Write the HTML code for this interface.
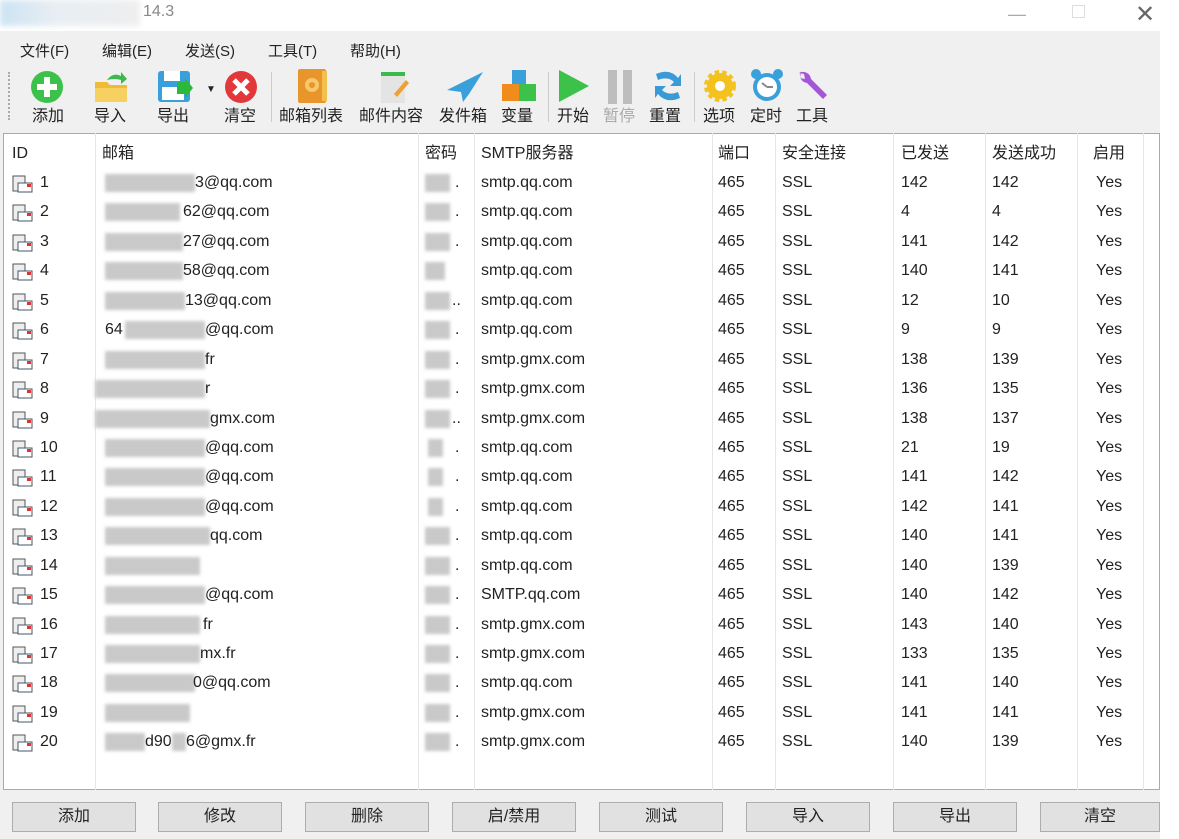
<!DOCTYPE html>
<html><head><meta charset="utf-8"><style>
*{margin:0;padding:0;box-sizing:border-box}
body{width:1179px;height:839px;background:#fff;position:relative;overflow:hidden;font-family:"Liberation Sans","Noto Sans CJK SC",sans-serif;color:#222;font-size:16px}
.a{position:absolute;white-space:nowrap}
.app{position:absolute;left:0;top:31px;width:1160px;height:808px;background:#f0f0f0}
.tbl{position:absolute;left:3px;top:133px;width:1157px;height:657px;background:#fff;border:1px solid #aaa}
.vl{position:absolute;top:133px;height:657px;width:1px;background:#e6e6e6}
.r{position:absolute;left:0;width:1160px;height:29px;line-height:29px}
.r span{position:absolute}
.bl{position:absolute;background:#c9c9c9;height:18px;top:6px;filter:blur(1.5px)}
.ic{position:absolute;left:12px;top:6px;width:22px;height:18px}
.btn{position:absolute;top:802px;height:30px;width:124px;background:#e1e1e1;border:1px solid #adadad;text-align:center;line-height:28px;font-size:16px}
.tb{position:absolute;top:102px;font-size:16px}
</style></head><body>
<div class="a" style="left:0;top:0;width:140px;height:26px;background:linear-gradient(90deg,#cde3f3,#e8eef3 40%,#eee);filter:blur(3px)"></div>
<div class="a" style="left:143px;top:3px;font-size:16px;color:#888">14.3</div>
<div class="a" style="left:1008px;top:4px;color:#aaa;font-size:18px">—</div>
<div class="a" style="left:1072px;top:5px;width:13px;height:13px;border:1px solid #ddd"></div>
<div class="a" style="left:1135px;top:0px;color:#666;font-size:24px">✕</div>
<div class="app"></div>
<div class="a" style="left:20px;top:40px;font-size:15px">文件(F)</div>
<div class="a" style="left:102px;top:40px;font-size:15px">编辑(E)</div>
<div class="a" style="left:185px;top:40px;font-size:15px">发送(S)</div>
<div class="a" style="left:268px;top:40px;font-size:15px">工具(T)</div>
<div class="a" style="left:350px;top:40px;font-size:15px">帮助(H)</div>
<div class="a" style="left:8px;top:72px;height:48px;border-left:2px dotted #aaa"></div>
<!-- icons -->
<svg class="a" style="left:30px;top:70px" width="36" height="34"><circle cx="17" cy="17" r="16" fill="#3cc24a"/><rect x="7" y="14" width="20" height="6" fill="#fff"/><rect x="14" y="7" width="6" height="20" fill="#fff"/></svg>
<svg class="a" style="left:93px;top:70px" width="36" height="34"><path d="M2 12h12l3 3h17v17H2z" fill="#f0b936"/><path d="M2 18h32v14H2z" fill="#f6d061"/><path d="M14 10q6-8 14-4l0-4 6 7-6 5v-4q-6-2-14 0z" fill="#3cb94a"/></svg>
<svg class="a" style="left:157px;top:70px" width="36" height="34"><rect x="1" y="1" width="32" height="31" rx="3" fill="#3aa0dc"/><rect x="7" y="1" width="16" height="10" fill="#fff"/><rect x="5" y="17" width="22" height="13" fill="#fff"/><path d="M20 12h8v-4l8 10-8 10v-4h-8z" fill="#2cb83c"/></svg>
<div class="a" style="left:206px;top:84px;font-size:10px">▼</div>
<svg class="a" style="left:224px;top:70px" width="36" height="34"><circle cx="17" cy="17" r="16" fill="#e3383b"/><path d="M10 10l14 14M24 10L10 24" stroke="#fff" stroke-width="5"/></svg>
<div class="a" style="left:271px;top:72px;height:50px;width:1px;background:#ccc"></div>
<svg class="a" style="left:296px;top:68px" width="36" height="36"><rect x="2" y="1" width="28" height="34" rx="2" fill="#e8952c"/><rect x="26" y="3" width="5" height="30" fill="#f4c04d"/><circle cx="16" cy="17" r="7" fill="#f7c76c"/><circle cx="16" cy="17" r="3" fill="#e8952c"/></svg>
<svg class="a" style="left:376px;top:70px" width="36" height="34"><rect x="5" y="5" width="24" height="28" fill="#e4e4e4"/><rect x="5" y="2" width="24" height="4" fill="#3cb94a"/><path d="M18 24l12-14 3 3-12 14z" fill="#f0a030"/></svg>
<svg class="a" style="left:445px;top:70px" width="40" height="34"><path d="M38 2L2 20l14 2 2 10 6-8z" fill="#3aa0dc"/></svg>
<svg class="a" style="left:500px;top:68px" width="38" height="36"><rect x="12" y="2" width="14" height="14" fill="#3aa0dc"/><rect x="2" y="16" width="17" height="17" fill="#f08c1c"/><rect x="19" y="16" width="17" height="17" fill="#3cc24a"/></svg>
<div class="a" style="left:548px;top:72px;height:50px;width:1px;background:#ccc"></div>
<svg class="a" style="left:556px;top:68px" width="36" height="36"><path d="M3 2l30 16-30 16z" fill="#3cc24a"/></svg>
<svg class="a" style="left:606px;top:70px" width="30" height="34"><rect x="2" y="0" width="9" height="34" fill="#bdbdbd"/><rect x="17" y="0" width="9" height="34" fill="#bdbdbd"/></svg>
<svg class="a" style="left:652px;top:68px" width="32" height="36"><path d="M4 6q14-6 22 4l3-4v12h-11l4-4q-6-6-16-2z" fill="#3a9ad8"/><path d="M28 30q-14 6-22-4l-3 4V18h11l-4 4q6 6 16 2z" fill="#3a9ad8"/></svg>
<div class="a" style="left:694px;top:72px;height:50px;width:1px;background:#ccc"></div>
<svg class="a" style="left:703px;top:69px" width="34" height="34"><circle cx="17" cy="17" r="13" fill="#f4c21c" stroke="#f4c21c" stroke-width="6" stroke-dasharray="4 3"/><circle cx="17" cy="17" r="5" fill="#fff"/></svg>
<svg class="a" style="left:749px;top:69px" width="36" height="34"><circle cx="18" cy="18" r="14" fill="#3aa0dc"/><circle cx="18" cy="18" r="10" fill="#fff"/><circle cx="7" cy="5" r="5" fill="#3aa0dc"/><circle cx="29" cy="5" r="5" fill="#3aa0dc"/><path d="M18 18l-5-4M18 18h6" stroke="#888" stroke-width="2"/></svg>
<svg class="a" style="left:795px;top:69px" width="36" height="34"><path d="M6 2a8 8 0 0 0 6 12l16 16 4-4-16-16A8 8 0 0 0 4 4l5 1 1 5-5-1z" fill="#a455d8"/></svg>
<div class="tb" style="left:32px">添加</div>
<div class="tb" style="left:94px">导入</div>
<div class="tb" style="left:157px">导出</div>
<div class="tb" style="left:224px">清空</div>
<div class="tb" style="left:279px">邮箱列表</div>
<div class="tb" style="left:359px">邮件内容</div>
<div class="tb" style="left:439px">发件箱</div>
<div class="tb" style="left:501px">变量</div>
<div class="tb" style="left:557px">开始</div>
<div class="tb" style="left:603px;color:#aaa">暂停</div>
<div class="tb" style="left:649px">重置</div>
<div class="tb" style="left:703px">选项</div>
<div class="tb" style="left:750px">定时</div>
<div class="tb" style="left:796px">工具</div>
<div class="tbl"></div>
<div class="vl" style="left:95px"></div><div class="vl" style="left:418px"></div><div class="vl" style="left:474px"></div><div class="vl" style="left:712px"></div><div class="vl" style="left:775px"></div><div class="vl" style="left:893px"></div><div class="vl" style="left:985px"></div><div class="vl" style="left:1077px"></div><div class="vl" style="left:1143px"></div>
<div class="r" style="top:139px"><span style="left:12px">ID</span><span style="left:102px">邮箱</span><span style="left:425px">密码</span><span style="left:481px">SMTP服务器</span><span style="left:718px">端口</span><span style="left:782px">安全连接</span><span style="left:901px">已发送</span><span style="left:992px">发送成功</span><span style="left:1093px">启用</span></div>
<div class="r" style="top:168px"><div class="ic"><svg width="22" height="18"><rect x="1" y="1" width="12" height="15" fill="#eee" stroke="#555"/><rect x="6" y="8" width="14" height="9" fill="#fff" stroke="#456"/><rect x="15" y="9" width="4" height="3" fill="#d33"/></svg></div><span style="left:40px">1</span><div class="bl" style="left:105px;width:90px"></div><span style="left:195px">3@qq.com</span><div class="bl" style="left:425px;width:25px"></div><span style="left:455px">.</span><span style="left:481px">smtp.qq.com</span><span style="left:718px">465</span><span style="left:782px">SSL</span><span style="left:901px">142</span><span style="left:992px">142</span><span style="left:1096px">Yes</span></div>
<div class="r" style="top:197px"><div class="ic"><svg width="22" height="18"><rect x="1" y="1" width="12" height="15" fill="#eee" stroke="#555"/><rect x="6" y="8" width="14" height="9" fill="#fff" stroke="#456"/><rect x="15" y="9" width="4" height="3" fill="#d33"/></svg></div><span style="left:40px">2</span><div class="bl" style="left:105px;width:75px"></div><span style="left:183px">62@qq.com</span><div class="bl" style="left:425px;width:25px"></div><span style="left:455px">.</span><span style="left:481px">smtp.qq.com</span><span style="left:718px">465</span><span style="left:782px">SSL</span><span style="left:901px">4</span><span style="left:992px">4</span><span style="left:1096px">Yes</span></div>
<div class="r" style="top:227px"><div class="ic"><svg width="22" height="18"><rect x="1" y="1" width="12" height="15" fill="#eee" stroke="#555"/><rect x="6" y="8" width="14" height="9" fill="#fff" stroke="#456"/><rect x="15" y="9" width="4" height="3" fill="#d33"/></svg></div><span style="left:40px">3</span><div class="bl" style="left:105px;width:78px"></div><span style="left:183px">27@qq.com</span><div class="bl" style="left:425px;width:25px"></div><span style="left:455px">.</span><span style="left:481px">smtp.qq.com</span><span style="left:718px">465</span><span style="left:782px">SSL</span><span style="left:901px">141</span><span style="left:992px">142</span><span style="left:1096px">Yes</span></div>
<div class="r" style="top:256px"><div class="ic"><svg width="22" height="18"><rect x="1" y="1" width="12" height="15" fill="#eee" stroke="#555"/><rect x="6" y="8" width="14" height="9" fill="#fff" stroke="#456"/><rect x="15" y="9" width="4" height="3" fill="#d33"/></svg></div><span style="left:40px">4</span><div class="bl" style="left:105px;width:78px"></div><span style="left:183px">58@qq.com</span><div class="bl" style="left:425px;width:20px"></div><span style="left:481px">smtp.qq.com</span><span style="left:718px">465</span><span style="left:782px">SSL</span><span style="left:901px">140</span><span style="left:992px">141</span><span style="left:1096px">Yes</span></div>
<div class="r" style="top:286px"><div class="ic"><svg width="22" height="18"><rect x="1" y="1" width="12" height="15" fill="#eee" stroke="#555"/><rect x="6" y="8" width="14" height="9" fill="#fff" stroke="#456"/><rect x="15" y="9" width="4" height="3" fill="#d33"/></svg></div><span style="left:40px">5</span><div class="bl" style="left:105px;width:80px"></div><span style="left:185px">13@qq.com</span><div class="bl" style="left:425px;width:25px"></div><span style="left:452px">..</span><span style="left:481px">smtp.qq.com</span><span style="left:718px">465</span><span style="left:782px">SSL</span><span style="left:901px">12</span><span style="left:992px">10</span><span style="left:1096px">Yes</span></div>
<div class="r" style="top:315px"><div class="ic"><svg width="22" height="18"><rect x="1" y="1" width="12" height="15" fill="#eee" stroke="#555"/><rect x="6" y="8" width="14" height="9" fill="#fff" stroke="#456"/><rect x="15" y="9" width="4" height="3" fill="#d33"/></svg></div><span style="left:40px">6</span><span style="left:105px">64</span><div class="bl" style="left:125px;width:80px"></div><span style="left:205px">@qq.com</span><div class="bl" style="left:425px;width:25px"></div><span style="left:455px">.</span><span style="left:481px">smtp.qq.com</span><span style="left:718px">465</span><span style="left:782px">SSL</span><span style="left:901px">9</span><span style="left:992px">9</span><span style="left:1096px">Yes</span></div>
<div class="r" style="top:345px"><div class="ic"><svg width="22" height="18"><rect x="1" y="1" width="12" height="15" fill="#eee" stroke="#555"/><rect x="6" y="8" width="14" height="9" fill="#fff" stroke="#456"/><rect x="15" y="9" width="4" height="3" fill="#d33"/></svg></div><span style="left:40px">7</span><div class="bl" style="left:105px;width:100px"></div><span style="left:205px">fr</span><div class="bl" style="left:425px;width:25px"></div><span style="left:455px">.</span><span style="left:481px">smtp.gmx.com</span><span style="left:718px">465</span><span style="left:782px">SSL</span><span style="left:901px">138</span><span style="left:992px">139</span><span style="left:1096px">Yes</span></div>
<div class="r" style="top:374px"><div class="ic"><svg width="22" height="18"><rect x="1" y="1" width="12" height="15" fill="#eee" stroke="#555"/><rect x="6" y="8" width="14" height="9" fill="#fff" stroke="#456"/><rect x="15" y="9" width="4" height="3" fill="#d33"/></svg></div><span style="left:40px">8</span><div class="bl" style="left:95px;width:110px"></div><span style="left:205px">r</span><div class="bl" style="left:425px;width:25px"></div><span style="left:455px">.</span><span style="left:481px">smtp.gmx.com</span><span style="left:718px">465</span><span style="left:782px">SSL</span><span style="left:901px">136</span><span style="left:992px">135</span><span style="left:1096px">Yes</span></div>
<div class="r" style="top:404px"><div class="ic"><svg width="22" height="18"><rect x="1" y="1" width="12" height="15" fill="#eee" stroke="#555"/><rect x="6" y="8" width="14" height="9" fill="#fff" stroke="#456"/><rect x="15" y="9" width="4" height="3" fill="#d33"/></svg></div><span style="left:40px">9</span><div class="bl" style="left:95px;width:115px"></div><span style="left:210px">gmx.com</span><div class="bl" style="left:425px;width:25px"></div><span style="left:452px">..</span><span style="left:481px">smtp.gmx.com</span><span style="left:718px">465</span><span style="left:782px">SSL</span><span style="left:901px">138</span><span style="left:992px">137</span><span style="left:1096px">Yes</span></div>
<div class="r" style="top:433px"><div class="ic"><svg width="22" height="18"><rect x="1" y="1" width="12" height="15" fill="#eee" stroke="#555"/><rect x="6" y="8" width="14" height="9" fill="#fff" stroke="#456"/><rect x="15" y="9" width="4" height="3" fill="#d33"/></svg></div><span style="left:40px">10</span><div class="bl" style="left:105px;width:100px"></div><span style="left:205px">@qq.com</span><div class="bl" style="left:428px;width:15px"></div><span style="left:455px">.</span><span style="left:481px">smtp.qq.com</span><span style="left:718px">465</span><span style="left:782px">SSL</span><span style="left:901px">21</span><span style="left:992px">19</span><span style="left:1096px">Yes</span></div>
<div class="r" style="top:462px"><div class="ic"><svg width="22" height="18"><rect x="1" y="1" width="12" height="15" fill="#eee" stroke="#555"/><rect x="6" y="8" width="14" height="9" fill="#fff" stroke="#456"/><rect x="15" y="9" width="4" height="3" fill="#d33"/></svg></div><span style="left:40px">11</span><div class="bl" style="left:105px;width:100px"></div><span style="left:205px">@qq.com</span><div class="bl" style="left:428px;width:15px"></div><span style="left:455px">.</span><span style="left:481px">smtp.qq.com</span><span style="left:718px">465</span><span style="left:782px">SSL</span><span style="left:901px">141</span><span style="left:992px">142</span><span style="left:1096px">Yes</span></div>
<div class="r" style="top:492px"><div class="ic"><svg width="22" height="18"><rect x="1" y="1" width="12" height="15" fill="#eee" stroke="#555"/><rect x="6" y="8" width="14" height="9" fill="#fff" stroke="#456"/><rect x="15" y="9" width="4" height="3" fill="#d33"/></svg></div><span style="left:40px">12</span><div class="bl" style="left:105px;width:100px"></div><span style="left:205px">@qq.com</span><div class="bl" style="left:428px;width:15px"></div><span style="left:455px">.</span><span style="left:481px">smtp.qq.com</span><span style="left:718px">465</span><span style="left:782px">SSL</span><span style="left:901px">142</span><span style="left:992px">141</span><span style="left:1096px">Yes</span></div>
<div class="r" style="top:521px"><div class="ic"><svg width="22" height="18"><rect x="1" y="1" width="12" height="15" fill="#eee" stroke="#555"/><rect x="6" y="8" width="14" height="9" fill="#fff" stroke="#456"/><rect x="15" y="9" width="4" height="3" fill="#d33"/></svg></div><span style="left:40px">13</span><div class="bl" style="left:105px;width:105px"></div><span style="left:210px">qq.com</span><div class="bl" style="left:425px;width:25px"></div><span style="left:455px">.</span><span style="left:481px">smtp.qq.com</span><span style="left:718px">465</span><span style="left:782px">SSL</span><span style="left:901px">140</span><span style="left:992px">141</span><span style="left:1096px">Yes</span></div>
<div class="r" style="top:551px"><div class="ic"><svg width="22" height="18"><rect x="1" y="1" width="12" height="15" fill="#eee" stroke="#555"/><rect x="6" y="8" width="14" height="9" fill="#fff" stroke="#456"/><rect x="15" y="9" width="4" height="3" fill="#d33"/></svg></div><span style="left:40px">14</span><div class="bl" style="left:105px;width:95px"></div><div class="bl" style="left:425px;width:25px"></div><span style="left:455px">.</span><span style="left:481px">smtp.qq.com</span><span style="left:718px">465</span><span style="left:782px">SSL</span><span style="left:901px">140</span><span style="left:992px">139</span><span style="left:1096px">Yes</span></div>
<div class="r" style="top:580px"><div class="ic"><svg width="22" height="18"><rect x="1" y="1" width="12" height="15" fill="#eee" stroke="#555"/><rect x="6" y="8" width="14" height="9" fill="#fff" stroke="#456"/><rect x="15" y="9" width="4" height="3" fill="#d33"/></svg></div><span style="left:40px">15</span><div class="bl" style="left:105px;width:100px"></div><span style="left:205px">@qq.com</span><div class="bl" style="left:425px;width:25px"></div><span style="left:455px">.</span><span style="left:481px">SMTP.qq.com</span><span style="left:718px">465</span><span style="left:782px">SSL</span><span style="left:901px">140</span><span style="left:992px">142</span><span style="left:1096px">Yes</span></div>
<div class="r" style="top:610px"><div class="ic"><svg width="22" height="18"><rect x="1" y="1" width="12" height="15" fill="#eee" stroke="#555"/><rect x="6" y="8" width="14" height="9" fill="#fff" stroke="#456"/><rect x="15" y="9" width="4" height="3" fill="#d33"/></svg></div><span style="left:40px">16</span><div class="bl" style="left:105px;width:95px"></div><span style="left:203px">fr</span><div class="bl" style="left:425px;width:25px"></div><span style="left:455px">.</span><span style="left:481px">smtp.gmx.com</span><span style="left:718px">465</span><span style="left:782px">SSL</span><span style="left:901px">143</span><span style="left:992px">140</span><span style="left:1096px">Yes</span></div>
<div class="r" style="top:639px"><div class="ic"><svg width="22" height="18"><rect x="1" y="1" width="12" height="15" fill="#eee" stroke="#555"/><rect x="6" y="8" width="14" height="9" fill="#fff" stroke="#456"/><rect x="15" y="9" width="4" height="3" fill="#d33"/></svg></div><span style="left:40px">17</span><div class="bl" style="left:105px;width:95px"></div><span style="left:200px">mx.fr</span><div class="bl" style="left:425px;width:25px"></div><span style="left:455px">.</span><span style="left:481px">smtp.gmx.com</span><span style="left:718px">465</span><span style="left:782px">SSL</span><span style="left:901px">133</span><span style="left:992px">135</span><span style="left:1096px">Yes</span></div>
<div class="r" style="top:668px"><div class="ic"><svg width="22" height="18"><rect x="1" y="1" width="12" height="15" fill="#eee" stroke="#555"/><rect x="6" y="8" width="14" height="9" fill="#fff" stroke="#456"/><rect x="15" y="9" width="4" height="3" fill="#d33"/></svg></div><span style="left:40px">18</span><div class="bl" style="left:105px;width:90px"></div><span style="left:193px">0@qq.com</span><div class="bl" style="left:425px;width:25px"></div><span style="left:455px">.</span><span style="left:481px">smtp.qq.com</span><span style="left:718px">465</span><span style="left:782px">SSL</span><span style="left:901px">141</span><span style="left:992px">140</span><span style="left:1096px">Yes</span></div>
<div class="r" style="top:698px"><div class="ic"><svg width="22" height="18"><rect x="1" y="1" width="12" height="15" fill="#eee" stroke="#555"/><rect x="6" y="8" width="14" height="9" fill="#fff" stroke="#456"/><rect x="15" y="9" width="4" height="3" fill="#d33"/></svg></div><span style="left:40px">19</span><div class="bl" style="left:105px;width:85px"></div><div class="bl" style="left:425px;width:25px"></div><span style="left:455px">.</span><span style="left:481px">smtp.gmx.com</span><span style="left:718px">465</span><span style="left:782px">SSL</span><span style="left:901px">141</span><span style="left:992px">141</span><span style="left:1096px">Yes</span></div>
<div class="r" style="top:727px"><div class="ic"><svg width="22" height="18"><rect x="1" y="1" width="12" height="15" fill="#eee" stroke="#555"/><rect x="6" y="8" width="14" height="9" fill="#fff" stroke="#456"/><rect x="15" y="9" width="4" height="3" fill="#d33"/></svg></div><span style="left:40px">20</span><div class="bl" style="left:105px;width:40px"></div><span style="left:145px">d90</span><div class="bl" style="left:172px;width:14px"></div><span style="left:186px">6@gmx.fr</span><div class="bl" style="left:425px;width:25px"></div><span style="left:455px">.</span><span style="left:481px">smtp.gmx.com</span><span style="left:718px">465</span><span style="left:782px">SSL</span><span style="left:901px">140</span><span style="left:992px">139</span><span style="left:1096px">Yes</span></div>
<div class="btn" style="left:12px">添加</div>
<div class="btn" style="left:158px">修改</div>
<div class="btn" style="left:305px">删除</div>
<div class="btn" style="left:452px">启/禁用</div>
<div class="btn" style="left:599px">测试</div>
<div class="btn" style="left:746px">导入</div>
<div class="btn" style="left:893px">导出</div>
<div class="btn" style="left:1040px;width:120px">清空</div>
</body></html>
